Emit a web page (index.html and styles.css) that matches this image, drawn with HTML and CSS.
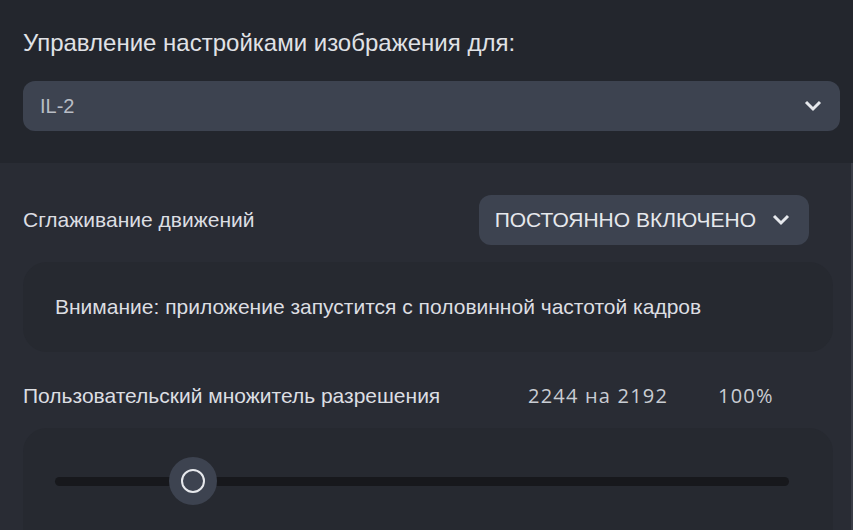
FILE: index.html
```html
<!DOCTYPE html>
<html>
  <head>
    <meta charset="UTF-8" />
    <title>Настройки изображения</title>
    <link rel="stylesheet" href="styles.css">
  </head>
  <body>
    <div class="top">
      <h2>Управление настройками изображения для:</h2>
      <div class="select">
        <span class="select-value">IL-2</span>
        <svg class="chevron" width="20" height="14" viewBox="0 0 20 14">
          <path d="M3 3 L10 10 L17 3" fill="none" stroke="#e6e8ec" stroke-width="3" />
        </svg>
      </div>
    </div>

    <div class="settings">
      <div class="row">
        <span class="label">Сглаживание движений</span>
        <div class="button-select">
          <span>ПОСТОЯННО ВКЛЮЧЕНО</span>
          <svg class="chevron" width="20" height="14" viewBox="0 0 20 14">
            <path d="M3 3 L10 10 L17 3" fill="none" stroke="#e6e8ec" stroke-width="3" />
          </svg>
        </div>
      </div>

      <div class="notice">
        Внимание: приложение запустится с половинной частотой кадров
      </div>

      <div class="row res-row">
        <span class="label res-label">Пользовательский множитель разрешения</span>
        <span class="res-value">2244 на 2192</span>
        <span class="res-percent">100%</span>
      </div>

      <div class="slider-box">
        <div class="track">
          <div class="thumb"><div class="ring"></div></div>
        </div>
      </div>
    </div>
  </body>
</html>
```

FILE: styles.css
```css
body {
  margin: 0;
  width: 853px;
  height: 530px;
  overflow: hidden;
  font-family: "Liberation Sans", Arial, sans-serif;
  background-color: #292c34;
  color: #dcdee2;
}

.top {
  box-sizing: border-box;
  background-color: #23262d;
  padding: 28px 13px 0 23px;
  height: 163px;
}

h2 {
  margin: 0 0 23px 0;
  font-size: 24px;
  font-weight: normal;
  line-height: 30px;
  color: #e0e2e6;
}

.select {
  display: flex;
  align-items: center;
  justify-content: space-between;
  height: 50px;
  padding: 0 17px 0 17px;
  background-color: #3d4350;
  border-radius: 12px;
}

.select-value {
  font-size: 20px;
  color: #b9bdc5;
}

.settings {
  box-sizing: border-box;
  padding: 32px 18px 0 23px;
  border-right: 2px solid #3a3d46;
  height: 367px;
}

.row {
  display: flex;
  align-items: center;
}

.label {
  font-size: 21px;
  color: #dcdee2;
}

.button-select {
  margin-left: auto;
  margin-right: 24px;
  display: flex;
  align-items: center;
  gap: 15px;
  height: 50px;
  padding: 0 18px 0 16px;
  background-color: #3d4350;
  border-radius: 12px;
  font-size: 21px;
  color: #e6e8ec;
}

.notice {
  margin-top: 17px;
  height: 90px;
  display: flex;
  align-items: center;
  padding-left: 32px;
  background-color: #262930;
  border-radius: 24px;
  font-size: 21px;
  color: #dcdee2;
}

.res-row {
  margin-top: 26px;
  height: 35px;
}

.res-label {
  width: 505px;
}

.res-value,
.res-percent {
  font-family: "Open Sans", sans-serif;
  font-size: 20px;
  letter-spacing: 1.2px;
  color: #c9cdd3;
}

.res-percent {
  margin-left: 50px;
}

.slider-box {
  box-sizing: border-box;
  margin-top: 15px;
  height: 102px;
  padding: 49px 23px 0 32px;
  background-color: #262930;
  border-radius: 24px 24px 0 0;
}

.track {
  position: relative;
  height: 9px;
  width: 734px;
  background-color: #17181c;
  border-radius: 5px;
}

.thumb {
  position: absolute;
  left: 114px;
  top: -20px;
  width: 48px;
  height: 48px;
  border-radius: 50%;
  background-color: #3d4350;
  display: flex;
  align-items: center;
  justify-content: center;
}

.ring {
  width: 20px;
  height: 20px;
  border: 2px solid #e6e8ec;
  border-radius: 50%;
}
```
